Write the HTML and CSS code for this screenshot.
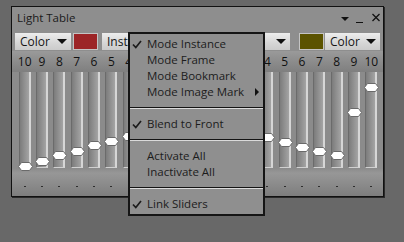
FILE: index.html
```html
<!DOCTYPE html>
<html lang="en">
<head>
  <meta charset="UTF-8">
  <title>Light Table</title>
  <link rel="stylesheet" href="styles.css">
</head>
<body>

<div class="panel">
  <div class="titlebar">
    <span class="title">Light Table</span>
    <div class="winbtns">
      <svg width="8" height="10" viewBox="0 0 8 10"><polygon points="0,4 8,4 4,8" fill="#111"/></svg>
      <svg width="8" height="10" viewBox="0 0 8 10"><rect x="0" y="9" width="7" height="1.6" fill="#111"/></svg>
      <svg width="8" height="10" viewBox="0 0 8 10"><path d="M0.5 1 L7.5 8 M7.5 1 L0.5 8" stroke="#111" stroke-width="1.3"/></svg>
    </div>
  </div>

  <div class="toolbar">
    <div class="drop small"><span>Color</span><i class="arrow"></i></div>
    <div class="swatch red"></div>
    <div class="drop wide"><span>Instance</span><i class="arrow"></i></div>
    <div class="swatch olive"></div>
    <div class="drop small right"><span>Color</span><i class="arrow"></i></div>
  </div>

  <div class="nums" id="nums"></div>
  <div class="tracks" id="tracks"></div>
  <div class="dots" id="dots"></div>
</div>

<div class="menu">
  <div class="item"><svg class="check" width="10" height="9" viewBox="0 0 10 9"><path d="M1 4.5 L3.8 7.5 L9 1" fill="none" stroke="#1c1c1c" stroke-width="1.7"/></svg>Mode Instance</div>
  <div class="item">Mode Frame</div>
  <div class="item">Mode Bookmark</div>
  <div class="item">Mode Image Mark<i class="sub"></i></div>
  <div class="sep"></div>
  <div class="item"><svg class="check" width="10" height="9" viewBox="0 0 10 9"><path d="M1 4.5 L3.8 7.5 L9 1" fill="none" stroke="#1c1c1c" stroke-width="1.7"/></svg>Blend to Front</div>
  <div class="sep"></div>
  <div class="item">Activate All</div>
  <div class="item">Inactivate All</div>
  <div class="sep"></div>
  <div class="item"><svg class="check" width="10" height="9" viewBox="0 0 10 9"><path d="M1 4.5 L3.8 7.5 L9 1" fill="none" stroke="#1c1c1c" stroke-width="1.7"/></svg>Link Sliders</div>
</div>

<script>
  // slider labels and thumb centre (px from top of track)
  const labels = [10,9,8,7,6,5,4,3,2,1,0,1,2,3,4,5,6,7,8,9,10];
  const vals   = [94,89,83,79,73,69,64,59,55,51,48,52,56,60,65,70,75,79,83,40,15];

  let nums = document.getElementById("nums");
  let tracks = document.getElementById("tracks");
  let dots = document.getElementById("dots");

  for (let i = 0; i < labels.length; i++) {
    let n = document.createElement("div");
    n.className = "num";
    n.innerText = labels[i];
    nums.append(n);

    let col = document.createElement("div");
    col.className = "col";
    let tr = document.createElement("div");
    tr.className = "track";
    let th = document.createElement("div");
    th.className = "thumb";
    th.style.top = (vals[i] - 4) + "px";
    th.innerHTML = '<svg width="15" height="9" viewBox="0 0 15 9"><polygon points="3.5,0.5 11.5,0.5 14.5,4.5 11.5,8.5 3.5,8.5 0.5,4.5" fill="#fff" stroke="#6a6a6a"/></svg>';
    col.append(tr);
    col.append(th);
    tracks.append(col);

    let d = document.createElement("div");
    d.className = "dotcell";
    d.innerHTML = "<i></i>";
    dots.append(d);
  }
</script>
</body>
</html>
```

FILE: styles.css
```css
body {
  margin: 0;
  width: 404px;
  height: 242px;
  background: #686868;
  font-family: "Open Sans", "Liberation Sans", sans-serif;
  color: #1a1a1a;
  overflow: hidden;
  position: relative;
}
.panel {
  box-sizing: border-box;
  margin: 6px 0 0 11px;
  width: 373px;
  height: 191px;
  border: 1px solid #111;
  box-shadow: 1px 1px 0 #2a2a2a;
  background: #8e8e8e;
  display: flex;
  flex-direction: column;
}
.titlebar {
  height: 26px;
  display: flex;
  align-items: flex-start;
  padding: 3px 3px 0 5px;
  box-sizing: border-box;
}
.title {
  font-size: 11.5px;
  line-height: 16px;
}
.winbtns {
  margin-left: auto;
  margin-top: 3px;
  display: flex;
  gap: 7px;
}
.winbtns svg:last-child {
  margin-left: 1px;
}
.toolbar {
  height: 17px;
  display: flex;
  padding-left: 3px;
  margin-bottom: 1px;
}
.drop {
  box-sizing: border-box;
  height: 17px;
  display: flex;
  align-items: center;
  padding: 0 4px 0 5px;
  background: linear-gradient(#ededed, #d6d6d6 60%, #cbcbcb);
  font-size: 12px;
  line-height: 17px;
  color: #151515;
}
.drop.small {
  width: 56px;
}
.drop.wide {
  width: 188px;
  margin-left: 4px;
}
.drop.right {
  width: 55px;
  margin-left: 1px;
}
.arrow {
  margin-left: auto;
  width: 0;
  height: 0;
  border-left: 5px solid transparent;
  border-right: 5px solid transparent;
  border-top: 5px solid #111;
}
.swatch {
  box-sizing: border-box;
  width: 25px;
  height: 17px;
  border: 1px solid #c4c4c4;
}
.swatch.red {
  margin-left: 2px;
  background: #9c2527;
}
.swatch.olive {
  margin-left: 9px;
  background: #5b5300;
}
.nums, .tracks, .dots {
  display: grid;
  grid-template-columns: repeat(21, 1fr);
  padding: 0 3px 0 4px;
}
.nums {
  height: 21px;
  background: linear-gradient(#9a9a9a, #8c8c8c 50%, #7f7f7f);
}
.num {
  text-align: center;
  font-size: 12px;
  line-height: 21px;
  color: #111;
}
.tracks {
  height: 96px;
  background: #8b8b8b;
}
.col {
  position: relative;
  display: flex;
  justify-content: center;
}
.track {
  box-sizing: border-box;
  width: 12px;
  height: 96px;
  border-left: 1px solid #6b6b6b;
  border-right: 2px solid #d6d6d6;
  border-bottom: 1px solid #d0d0d0;
  background: linear-gradient(90deg, #7c7c7c, #8e8e8e 45%, #a4a4a4);
}
.thumb {
  position: absolute;
  left: 50%;
  margin-left: -7px;
  width: 15px;
  height: 9px;
  line-height: 0;
}
.dots {
  height: 28px;
  background: linear-gradient(#8a8a8a, #979797 18%, #8c8c8c 55%, #7d7d7d);
}
.dotcell {
  display: flex;
  justify-content: center;
  padding-top: 18px;
}
.dotcell i {
  width: 2px;
  height: 1px;
  background: #2e2e2e;
}
.menu {
  position: absolute;
  left: 128px;
  top: 32px;
  box-sizing: border-box;
  width: 137px;
  height: 184px;
  border: 2px solid #151515;
  background: #8f8f8f;
  padding: 2px 0;
  font-size: 11.5px;
}
.item {
  position: relative;
  height: 16px;
  line-height: 16px;
  padding: 0 4px 0 17px;
  display: flex;
  align-items: center;
  color: #1c1c1c;
}
.check {
  position: absolute;
  left: 2px;
  top: 4px;
}
.sub {
  margin-left: auto;
  width: 0;
  height: 0;
  border-top: 4px solid transparent;
  border-bottom: 4px solid transparent;
  border-left: 4px solid #111;
}
.sep {
  height: 16px;
  display: flex;
  flex-direction: column;
  justify-content: center;
}
.sep::before {
  content: "";
  display: block;
  border-top: 1px solid #141414;
  border-bottom: 1px solid #dadada;
}
```
